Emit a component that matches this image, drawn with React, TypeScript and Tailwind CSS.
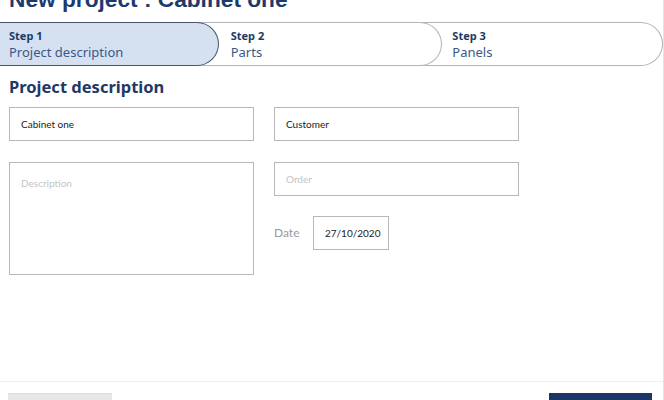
import React from 'react'

const steps = [
  { num: 'Step 1', label: 'Project description', active: true },
  { num: 'Step 2', label: 'Parts', active: false },
  { num: 'Step 3', label: 'Panels', active: false },
]

const inputFont = { fontFamily: 'Lato, "Open Sans", sans-serif' }
const uiFont = { fontFamily: '"Noto Sans", "Open Sans", sans-serif' }

function Field({ value, placeholder, className = '' }: { value?: string; placeholder?: string; className?: string }) {
  return (
    <div
      className={`flex h-[34px] items-center border border-[#b8b8b8] pl-[11px] text-[10px] ${value ? 'text-[#222]' : 'text-[#c4c4c4]'} ${className}`}
      style={inputFont}
    >
      {value || placeholder}
    </div>
  )
}

export default function App() {
  return (
    <div className="flex h-[400px] w-[664px] flex-col overflow-hidden border-r border-[#e4e4e4] bg-white">
      {/* Title, scrolled partly out of view */}
      <h1
        className="-mt-[14px] ml-[9px] text-[22.7px] font-bold leading-[26px] text-[#1d3a6c]"
        style={{ fontFamily: '"Liberation Sans", Arial, sans-serif' }}
      >
        New project : Cabinet one
      </h1>

      {/* Stepper */}
      <div className="mt-[10px] flex h-[44px]" style={uiFont}>
        {steps.map((s, i) => (
          <div
            key={s.num}
            className={`flex h-[44px] flex-col justify-center rounded-r-[22px] border-y border-r ${
              s.active
                ? 'z-30 w-[219px] border-[#4c5566] bg-[#d5e1f1] pl-[9px]'
                : i === 1
                  ? 'z-20 -ml-[22px] w-[246px] border-[#b4b4b4] bg-white pl-[34px]'
                  : 'z-10 -ml-[22px] w-[243px] border-[#b4b4b4] bg-white pl-[32px]'
            }`}
          >
            <span className="text-[11px] font-bold leading-[16px] text-[#1e3966]">{s.num}</span>
            <span className="text-[13px] leading-[16px] text-[#3b5886]">{s.label}</span>
          </div>
        ))}
      </div>

      <h2 className="mt-[9px] ml-[9px] text-[16.5px] font-bold leading-[24px] text-[#1e3966]" style={uiFont}>
        Project description
      </h2>

      {/* Form */}
      <div className="mt-[8px] ml-[9px] flex gap-[20px]">
        <div className="flex w-[245px] flex-col gap-[21px]">
          <Field value="Cabinet one" />
          <div
            className="h-[113px] border border-[#b8b8b8] pt-[13px] pl-[11px] text-[10px] text-[#c4c4c4]"
            style={inputFont}
          >
            Description
          </div>
        </div>
        <div className="flex w-[245px] flex-col">
          <Field value="Customer" />
          <Field placeholder="Order" className="mt-[21px]" />
          <div className="mt-[20px] flex items-center">
            <span className="w-[39px] text-[12px] text-[#9a9a9a]" style={inputFont}>
              Date
            </span>
            <Field value="27/10/2020" className="w-[76px] text-[9.5px]" />
          </div>
        </div>
      </div>

      {/* Footer */}
      <div className="mt-auto flex h-[19px] justify-between border-t border-[#efefef] pt-[11px] pr-[11px] pl-[8px]">
        <button className="h-[30px] w-[104px] border-t border-[#dcdcdc] bg-[#e7e7e7]" />
        <button className="h-[30px] w-[103px] bg-[#1b3567]" />
      </div>
    </div>
  )
}
